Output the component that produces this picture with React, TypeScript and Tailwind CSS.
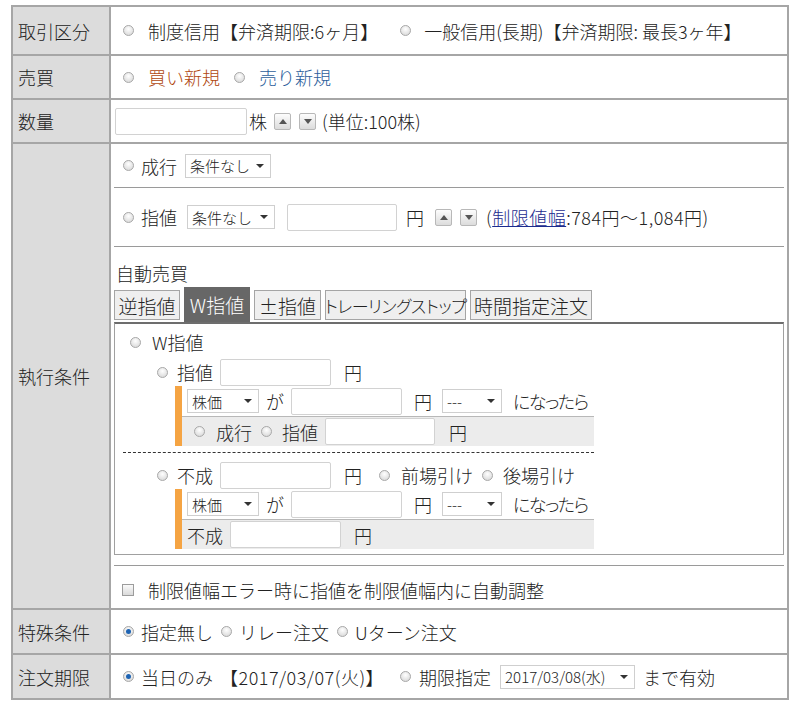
import React from "react";

// small form widgets drawn to look like the old IE-style controls
function Radio({ on = false, className = "" }: { on?: boolean; className?: string }) {
  return (
    <span
      className={`inline-flex h-[11px] w-[11px] shrink-0 items-center justify-center rounded-full border border-[#a9a9a9] bg-[radial-gradient(circle_at_50%_35%,#ffffff,#d2d2d2)] ${className}`}
    >
      {on && <span className="h-[5px] w-[5px] rounded-full bg-[#1d63b3]" />}
    </span>
  );
}

function Select({ label, className = "" }: { label: string; className?: string }) {
  return (
    <span
      className={`inline-flex h-[24px] shrink-0 items-center justify-between border border-[#cfcfcf] bg-white pl-[4px] pr-[6px] text-[15px] leading-none text-[#222] ${className}`}
    >
      <span>{label}</span>
      <span className="h-0 w-0 border-x-[4px] border-t-[4px] border-x-transparent border-t-[#333]" />
    </span>
  );
}

function Spin({ up = false, className = "" }: { up?: boolean; className?: string }) {
  return (
    <span
      className={`inline-flex h-[17px] w-[17px] shrink-0 items-center justify-center rounded-[2px] border border-[#b8b8b8] bg-gradient-to-b from-[#fdfdfd] to-[#dcdcdc] ${className}`}
    >
      {up ? (
        <span className="h-0 w-0 border-x-[4px] border-b-[5px] border-x-transparent border-b-[#555]" />
      ) : (
        <span className="h-0 w-0 border-x-[4px] border-t-[5px] border-x-transparent border-t-[#555]" />
      )}
    </span>
  );
}

function Box({ className = "" }: { className?: string }) {
  return <span className={`inline-block h-[27px] shrink-0 rounded-[2px] border border-[#d2d2d2] bg-white ${className}`} />;
}

function Label({ children }: { children: React.ReactNode }) {
  return (
    <th className="w-[98px] border-2 border-[#a6a6a6] bg-[#dcdcdc] pl-[5px] text-left align-middle font-light">
      {children}
    </th>
  );
}

const tabs = [
  { t: "逆指値", w: "w-[66px] text-[19px]" },
  { t: "W指値", w: "w-[66px] text-[19px]" },
  { t: "±指値", w: "w-[67px] text-[19px]" },
  { t: "トレーリングストップ", w: "w-[141px] text-[17px] tracking-[-0.5px]" },
  { t: "時間指定注文", w: "w-[122px] text-[19px]" },
];

// one orange-barred block inside the W指値 panel
function TriggerBlock({ bottom }: { bottom: React.ReactNode }) {
  return (
    <div className="ml-[60px] w-[419px] border-l-[7px] border-l-[#f5a443]">
      <div className="flex h-[30px] items-center whitespace-nowrap pl-[5px]">
        <Select label="株価" className="w-[72px]" />
        <span className="ml-[7px]">が</span>
        <Box className="ml-[7px] w-[111px]" />
        <span className="ml-[12px]">円</span>
        <Select label="---" className="ml-[10px] w-[60px]" />
        <span className="ml-[11px] shrink-0 tracking-[-1.5px] [font-feature-settings:'palt']">になったら</span>
      </div>
      <div className="flex h-[30px] items-center border-t border-[#b8b8b8] bg-[#ececec]">{bottom}</div>
    </div>
  );
}

export default function App() {
  return (
    <div className="min-h-screen bg-white pl-[11px] pt-[5px] font-['Noto_Sans_CJK_JP','Noto_Sans',sans-serif] text-[18px] font-light leading-none text-[#222]">
      <table className="w-[778px] border-collapse">
        <tbody>
          <tr className="h-[49px]">
            <Label>取引区分</Label>
            <td className="border-2 border-[#a6a6a6] px-[3px]">
              <div className="flex items-center pl-[9px]">
                <Radio />
                <span className="ml-[14px]">制度信用【弁済期限:6ヶ月】</span>
                <Radio className="ml-[22px]" />
                <span className="ml-[13px]">一般信用(長期)【弁済期限: 最長3ヶ年】</span>
              </div>
            </td>
          </tr>
          <tr className="h-[44px]">
            <Label>売買</Label>
            <td className="border-2 border-[#a6a6a6] px-[3px]">
              <div className="flex items-center pl-[9px]">
                <Radio />
                <span className="ml-[14px] text-[#b0470f]">買い新規</span>
                <Radio className="ml-[14px]" />
                <span className="ml-[14px] text-[#2d5e9b]">売り新規</span>
              </div>
            </td>
          </tr>
          <tr className="h-[44px]">
            <Label>数量</Label>
            <td className="border-2 border-[#a6a6a6] px-[3px]">
              <div className="flex items-center pl-[1px]">
                <Box className="w-[132px]" />
                <span className="ml-[2px]">株</span>
                <Spin up className="ml-[7px]" />
                <Spin className="ml-[8px]" />
                <span className="ml-[6px]">(単位:100株)</span>
              </div>
            </td>
          </tr>
          <tr>
            <Label>執行条件</Label>
            <td className="border-2 border-[#a6a6a6] px-[3px] pb-0">
              <div className="flex h-[44px] items-center border-b border-[#9a9a9a] pl-[9px]">
                <Radio />
                <span className="ml-[7px]">成行</span>
                <Select label="条件なし" className="ml-[8px] w-[86px]" />
              </div>
              <div className="flex h-[59px] items-center border-b border-[#9a9a9a] pl-[9px]">
                <Radio />
                <span className="ml-[7px]">指値</span>
                <Select label="条件なし" className="ml-[10px] w-[88px]" />
                <Box className="ml-[12px] w-[110px]" />
                <span className="ml-[9px]">円</span>
                <Spin up className="ml-[11px]" />
                <Spin className="ml-[8px]" />
                <span className="ml-[9px] tracking-[0.5px]">
                  (<a className="text-[#1b2b8e] underline">制限値幅</a>:784円〜1,084円)
                </span>
              </div>
              <div className="pl-[2px] pt-[17px]">自動売買</div>
              <div className="mt-[5px] flex items-end gap-[4px]">
                {tabs.map(({ t, w }) =>
                  t === "W指値" ? (
                    <span key={t} className={`flex h-[35px] items-center justify-center bg-[#676767] text-white ${w}`}>
                      {t}
                    </span>
                  ) : (
                    <span
                      key={t}
                      className={`mb-[2px] flex h-[30px] items-center justify-center whitespace-nowrap border border-[#a5a5a5] bg-[#efefef] [font-feature-settings:'palt'] ${w}`}
                    >
                      {t}
                    </span>
                  )
                )}
              </div>
              <div className="border border-t-2 border-[#a0a0a0] border-t-[#6d6d6d] pb-[5px]">
                <div className="mt-[7px] flex h-[22px] items-center pl-[15px]">
                  <Radio />
                  <span className="ml-[11px]">W指値</span>
                </div>
                <div className="mt-[5px] flex h-[28px] items-center pl-[42px]">
                  <Radio />
                  <span className="ml-[9px]">指値</span>
                  <Box className="ml-[7px] w-[111px]" />
                  <span className="ml-[13px]">円</span>
                </div>
                <TriggerBlock
                  bottom={
                    <>
                      <Radio className="ml-[12px]" />
                      <span className="ml-[11px]">成行</span>
                      <Radio className="ml-[9px]" />
                      <span className="ml-[10px]">指値</span>
                      <Box className="ml-[7px] w-[110px]" />
                      <span className="ml-[14px]">円</span>
                    </>
                  }
                />
                <div className="ml-[8px] mt-[6px] w-[471px] border-t border-dashed border-[#333]" />
                <div className="mt-[8px] flex h-[28px] items-center pl-[42px]">
                  <Radio />
                  <span className="ml-[9px]">不成</span>
                  <Box className="ml-[7px] w-[111px]" />
                  <span className="ml-[13px]">円</span>
                  <Radio className="ml-[17px]" />
                  <span className="ml-[11px]">前場引け</span>
                  <Radio className="ml-[9px]" />
                  <span className="ml-[10px]">後場引け</span>
                </div>
                <TriggerBlock
                  bottom={
                    <>
                      <span className="ml-[5px]">不成</span>
                      <Box className="ml-[7px] w-[111px]" />
                      <span className="ml-[13px]">円</span>
                    </>
                  }
                />
              </div>
              <div className="mt-[10px] flex h-[43px] items-center border-t border-[#9a9a9a] pl-[8px] pt-[6px]">
                <span className="h-[12px] w-[12px] border border-[#9c9c9c] bg-gradient-to-b from-[#fafafa] to-[#dadada]" />
                <span className="ml-[14px]">制限値幅エラー時に指値を制限値幅内に自動調整</span>
              </div>
            </td>
          </tr>
          <tr className="h-[45px]">
            <Label>特殊条件</Label>
            <td className="border-2 border-[#a6a6a6] px-[3px]">
              <div className="flex items-center pl-[9px]">
                <Radio on />
                <span className="ml-[7px]">指定無し</span>
                <Radio className="ml-[8px]" />
                <span className="ml-[7px]">リレー注文</span>
                <Radio className="ml-[8px]" />
                <span className="ml-[7px]">Uターン注文</span>
              </div>
            </td>
          </tr>
          <tr className="h-[45px]">
            <Label>注文期限</Label>
            <td className="border-2 border-[#a6a6a6] px-[3px]">
              <div className="flex items-center pl-[9px]">
                <Radio on />
                <span className="ml-[7px]">当日のみ</span>
                <span className="ml-[7px] tracking-[0.5px]">【2017/03/07(火)】</span>
                <Radio className="ml-[16px]" />
                <span className="ml-[8px]">期限指定</span>
                <Select label="2017/03/08(水)" className="ml-[9px] w-[135px] text-[14px]" />
                <span className="ml-[8px]">まで有効</span>
              </div>
            </td>
          </tr>
        </tbody>
      </table>
    </div>
  );
}
